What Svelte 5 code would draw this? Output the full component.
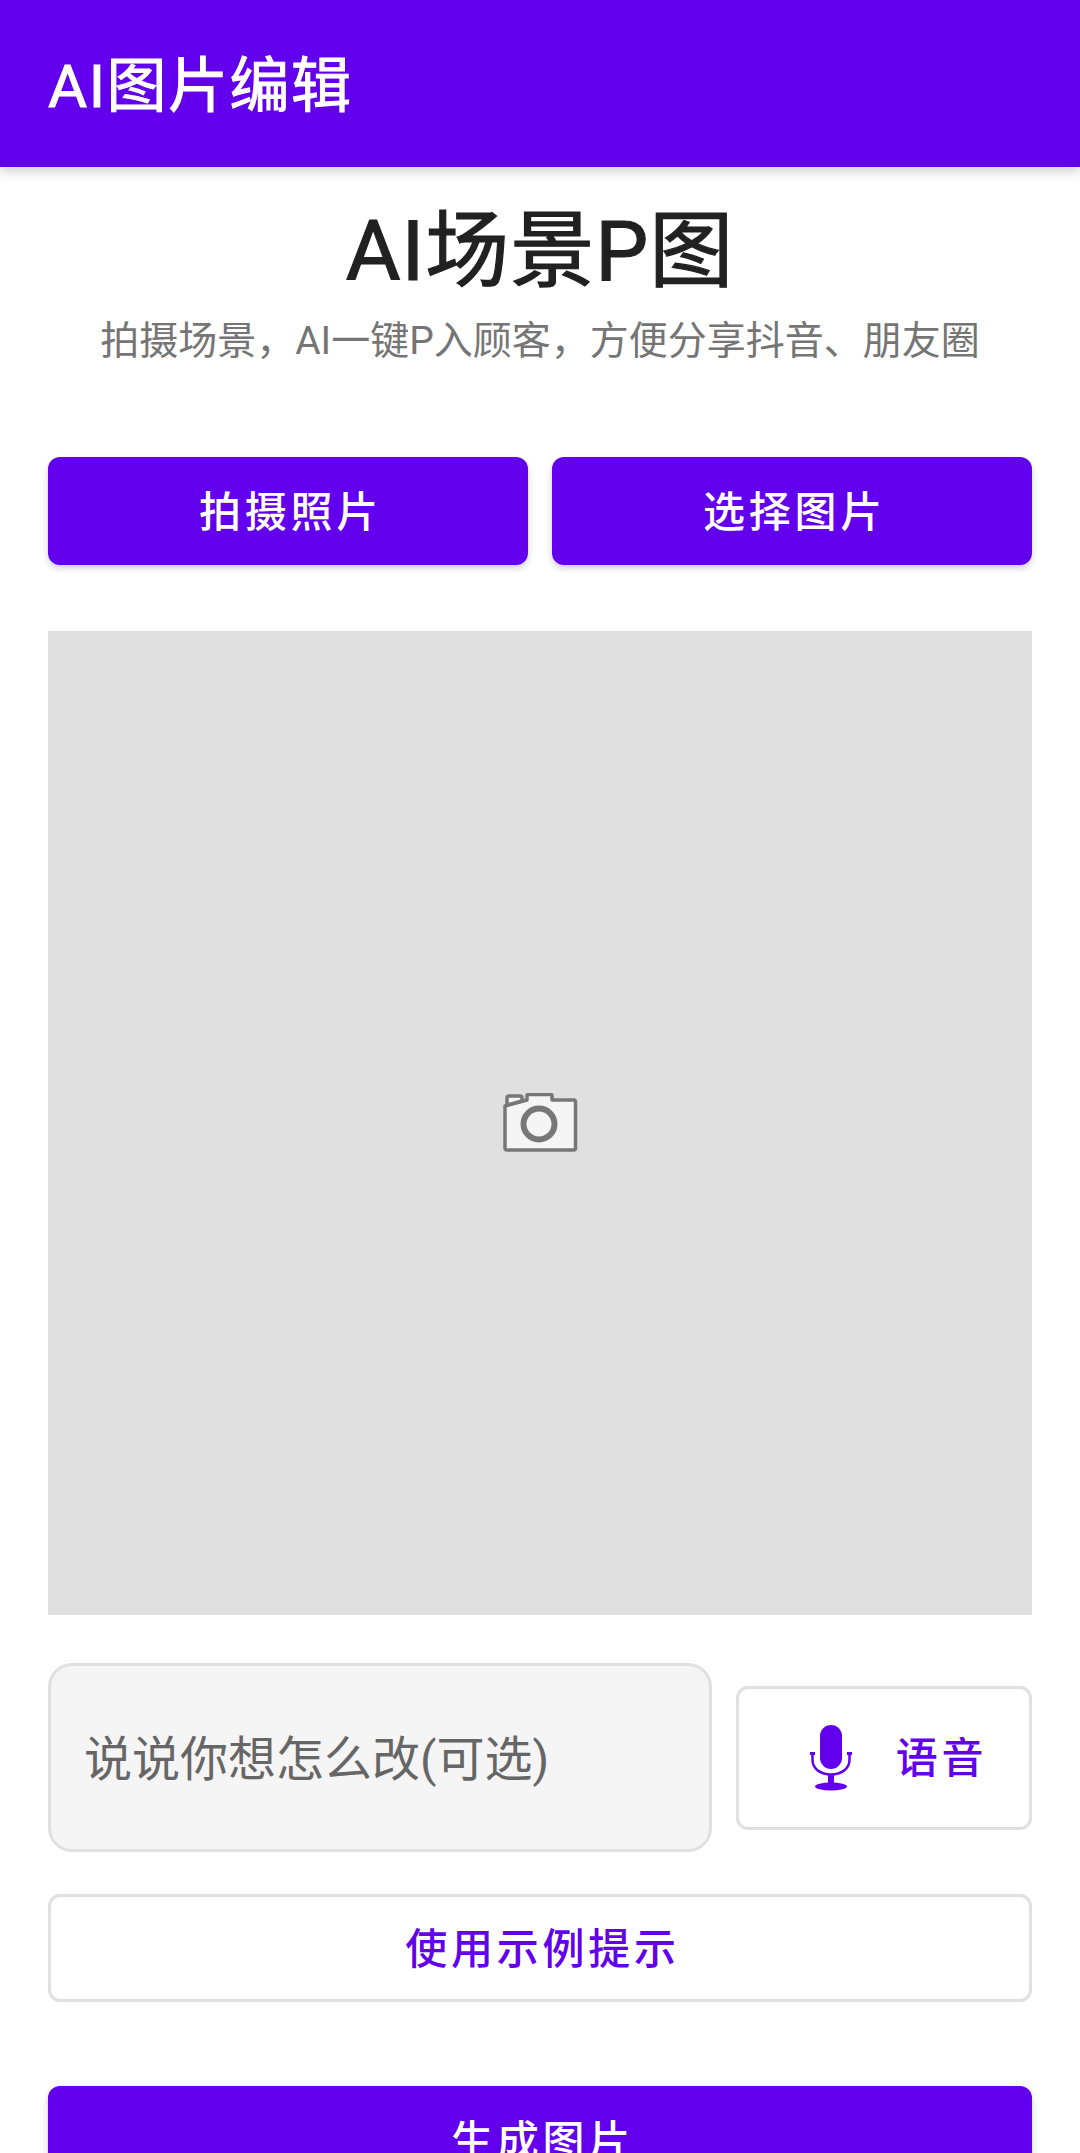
<script>
	const prompt = '说说你想怎么改(可选)';
</script>

<div class="page">
	<header class="toolbar">AI图片编辑</header>

	<main class="content">
		<h1 class="title">AI场景P图</h1>
		<p class="subtitle">拍摄场景，AI一键P入顾客，方便分享抖音、朋友圈</p>

		<div class="actions">
			<button class="btn primary">拍摄照片</button>
			<button class="btn primary">选择图片</button>
		</div>

		<div class="preview">
			<svg width="76" height="60" viewBox="0 0 76 60">
				<path class="cam" d="M3 13 L3 55 Q3 57 5 57 L71.500 57 Q73.500 57 73.500 55 L73.500 9 Q73.500 7 71.500 7 L50 7 L50 2.500 Q50 1.500 49 1.500 L26 1.500 Q25 1.500 25 2.500 L25 7 L3 13 Z" />
				<path class="cam" d="M5 12 L5 5 Q5 3 7 3 L18 3 Q20 3 20 5 L20 8 Z" />
				<circle class="lens" cx="37" cy="31" r="15.500" />
			</svg>
		</div>

		<div class="prompt-row">
			<div class="prompt">{prompt}</div>
			<button class="btn outline voice">
				<svg width="72" height="72" viewBox="0 0 72 72">
					<rect x="25" y="3" width="22" height="44" rx="11" fill="#6200ee" />
					<path d="M17.500 33 V38 C17.500 47 26 52.500 36 52.500 C46 52.500 54.500 47 54.500 38 V33" fill="none" stroke="#6200ee" stroke-width="2.500" />
					<rect x="15" y="30" width="5" height="3" fill="#6200ee" />
					<rect x="52" y="30" width="5" height="3" fill="#6200ee" />
					<rect x="33" y="52" width="6" height="11" fill="#6200ee" />
					<ellipse cx="36" cy="64.500" rx="16" ry="4" fill="#6200ee" />
				</svg>
				<span>语音</span>
			</button>
		</div>

		<button class="btn outline example">使用示例提示</button>

		<button class="btn primary generate">生成图片</button>
	</main>
</div>

<style>
	:global(body) {
		margin: 0;
		background: #fff;
	}

	.page {
		height: 2153px;
		overflow: hidden;
		font-family: Roboto, "Noto Sans CJK SC", "Noto Sans", sans-serif;
	}

	.toolbar {
		height: 167px;
		box-sizing: border-box;
		padding: 0 0 6px 48px;
		display: flex;
		align-items: center;
		background: #6200ee;
		color: #fff;
		font-size: 60px;
		font-weight: 400;
		letter-spacing: 1.500px;
		-webkit-text-stroke: 1px #fff;
		box-shadow: 0 4px 12px rgba(0, 0, 0, 0.2);
	}

	.content {
		padding: 0 48px;
		display: flex;
		flex-direction: column;
	}

	.title {
		margin: 24px 0 0;
		font-size: 84px;
		line-height: 122px;
		font-weight: 400;
		letter-spacing: 1px;
		-webkit-text-stroke: 1.200px #212121;
		color: #212121;
		text-align: center;
	}

	.subtitle {
		margin: 0;
		font-size: 39px;
		line-height: 56px;
		color: #757575;
		text-align: center;
	}

	.actions {
		display: grid;
		grid-template-columns: 1fr 1fr;
		gap: 24px;
		margin-top: 88px;
	}

	.btn {
		font-family: inherit;
		font-size: 42px;
		font-weight: 500;
		letter-spacing: 3.75px;
		height: 108px;
		border-radius: 12px;
		padding: 0 0 6px 5px;
		box-sizing: border-box;
	}

	.primary {
		background: #6200ee;
		color: #fff;
		border: none;
		box-shadow: 0 3px 6px rgba(0, 0, 0, 0.2);
	}

	.outline {
		background: #fff;
		color: #6200ee;
		border: 3px solid #e0e0e0;
	}

	.preview {
		height: 984px;
		margin-top: 66px;
		background: #e0e0e0;
		display: flex;
		align-items: center;
		justify-content: center;
	}

	.cam {
		fill: #f5f5f5;
		stroke: #777;
		stroke-width: 3.500;
		stroke-linejoin: round;
	}

	.lens {
		fill: #f5f5f5;
		stroke: #777;
		stroke-width: 6;
	}

	.prompt-row {
		display: flex;
		align-items: center;
		gap: 24px;
		margin-top: 48px;
	}

	.prompt {
		flex: 0 0 664px;
		height: 189px;
		box-sizing: border-box;
		padding: 0 0 6px 33px;
		display: flex;
		align-items: center;
		background: #f5f5f5;
		border: 3px solid #e0e0e0;
		border-radius: 24px;
		font-size: 48px;
		color: #666;
	}

	.voice {
		flex: 1;
		height: 144px;
		padding: 0 0 0 14px;
		display: flex;
		align-items: center;
		justify-content: center;
		gap: 29px;
	}

	.voice span {
		padding-bottom: 6px;
	}

	.example {
		margin-top: 42px;
	}

	.generate {
		margin-top: 84px;
		flex: none;
	}
</style>
